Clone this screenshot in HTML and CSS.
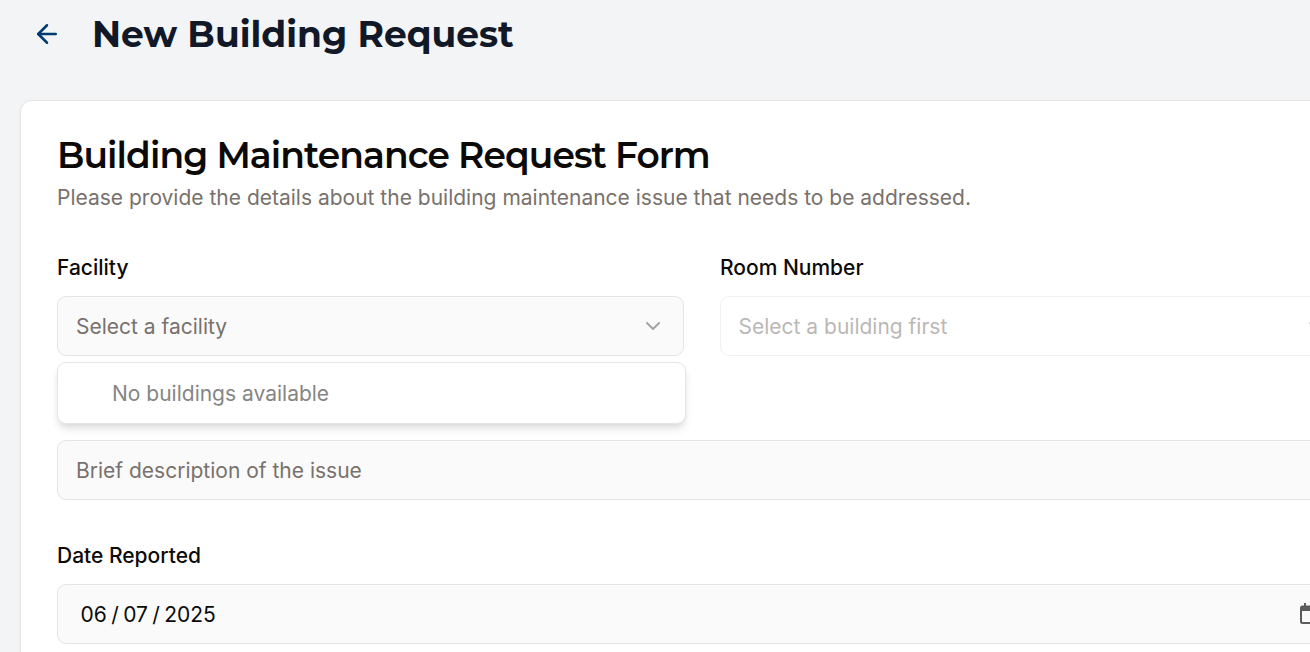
FILE: index.html
```html
<!DOCTYPE html>
<html lang="en">
<head>
<meta charset="utf-8">
<title>New Building Request</title>
<link rel="stylesheet" href="styles.css">
</head>
<body>
<header class="page-header">
  <svg class="back" viewBox="0 0 24 24" fill="none" stroke="currentColor" stroke-width="2" stroke-linecap="round" stroke-linejoin="round"><path d="m12 19-7-7 7-7"/><path d="M19 12H5"/></svg>
  <h1 class="page-title">New Building Request</h1>
</header>
<main class="card">
  <h2 class="card-title">Building Maintenance Request Form</h2>
  <p class="card-text">Please provide the details about the building maintenance issue that needs to be addressed.</p>
  <form class="form">
    <div class="row">
      <div class="group">
        <span class="label">Facility</span>
        <div class="field select">
          <span>Select a facility</span>
          <svg class="chevron" viewBox="0 0 24 24" fill="none" stroke="currentColor" stroke-width="2" stroke-linecap="round" stroke-linejoin="round"><path d="m6 9 6 6 6-6"/></svg>
        </div>
        <div class="menu">No buildings available</div>
      </div>
      <div class="group">
        <span class="label">Room Number</span>
        <div class="field select disabled">
          <span>Select a building first</span>
          <svg class="chevron" viewBox="0 0 24 24" fill="none" stroke="currentColor" stroke-width="2" stroke-linecap="round" stroke-linejoin="round"><path d="m6 9 6 6 6-6"/></svg>
        </div>
      </div>
    </div>
    <div class="group">
      <span class="label"></span>
      <div class="field">Brief description of the issue</div>
    </div>
    <div class="group">
      <span class="label">Date Reported</span>
      <div class="field date">
        <span class="date-value"><span>06</span><span>/</span><span>07</span><span>/</span><span>2025</span></span>
        <svg class="calendar" viewBox="0 0 20 21" fill="currentColor"><path fill-rule="evenodd" d="M4 2.500V0h2v2.500h8V0h2v2.500h1.500A2.500 2.500 0 0 1 20 5v13.500a2.500 2.500 0 0 1-2.500 2.500h-15A2.500 2.500 0 0 1 0 18.500V5a2.500 2.500 0 0 1 2.500-2.500zM2 8v10.200a.8.8 0 0 0 .8.8h14.400a.8.8 0 0 0 .8-.8V8z"/></svg>
      </div>
    </div>
  </form>
</main>
</body>
</html>
```
FILE: styles.css
```css
* { box-sizing: border-box; margin: 0; }
html, body { height: 100%; overflow: hidden; }
body {
  background: #f3f4f6;
  color: #0c0a09;
  font: 400 21px/30px Inter, sans-serif;
}
.page-header {
  display: flex;
  align-items: center;
  gap: 30px;
  height: 68px;
  padding-left: 32px;
}
.back { width: 30px; height: 30px; color: #003a70; }
.page-title, .card-title {
  font-family: Montserrat, Inter, sans-serif;
  white-space: nowrap;
}
.page-title { font-size: 36px; line-height: 44px; font-weight: 700; color: #111827; }
.card {
  width: 1364px;
  height: 552px;
  margin: 32px 0 0 20px;
  padding: 36px;
  background: #fff;
  border: 1px solid #e7e5e4;
  border-bottom: 0;
  border-radius: 12px 12px 0 0;
  box-shadow: 0 1.5px 3px rgba(0, 0, 0, .05);
}
.card-title { font-size: 36px; line-height: 36px; font-weight: 600; letter-spacing: -.9px; }
.card-text { margin-top: 10px; color: #78716c; white-space: nowrap; }
.form { display: flex; flex-direction: column; gap: 41px; margin-top: 40px; }
.row { display: grid; grid-template-columns: 627px 627px; gap: 36px; }
.group { position: relative; display: flex; flex-direction: column; gap: 13px; }
.label { height: 30px; font-weight: 500; }
.field {
  display: flex;
  align-items: center;
  justify-content: space-between;
  height: 60px;
  padding: 2px 18px 0;
  color: #78716c;
  background: #fafafa;
  border: 1px solid #e5e5e5;
  border-radius: 9px;
}
.disabled { padding-left: 17.5px; background: #fff; opacity: .5; }
.chevron { width: 24px; height: 24px; margin-top: -2px; opacity: .5; color: #57534e; }
.menu {
  position: absolute;
  top: 109px;
  left: 0;
  z-index: 1;
  width: 629px;
  height: 62px;
  padding: 16px 0 0 54px;
  color: #858585;
  background: #fff;
  border: 1px solid #e5e5e5;
  border-radius: 9px;
  box-shadow: 0 6px 9px -1.5px rgba(0, 0, 0, .1), 0 3px 6px -3px rgba(0, 0, 0, .1);
}
.date { color: #0c0a09; }
.date-value { display: flex; gap: 4.400px; padding-left: 4.500px; }
.calendar { width: 20px; height: 21px; margin: -3px 8px 0 0; color: #5b5b5b; }
```
